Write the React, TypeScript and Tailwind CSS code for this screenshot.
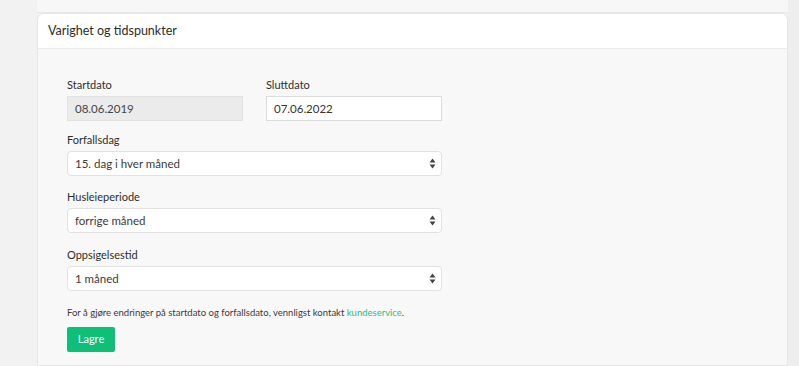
import { ReactNode } from 'react';

const font = { fontFamily: 'Lato, "Noto Sans", sans-serif' };

function Label({ children }: { children: ReactNode }) {
  return <div className="text-[11px] leading-[14px] text-[#2d2d2d] mb-[4px]">{children}</div>;
}

function Arrows() {
  return (
    <svg width="7" height="11" viewBox="0 0 7 11" className="text-[#444]">
      <path d="M3.5 0.5 L6.5 4.5 H0.5 Z" fill="currentColor" />
      <path d="M3.5 10.5 L6.5 6.5 H0.5 Z" fill="currentColor" />
    </svg>
  );
}

function Select({ value }: { value: string }) {
  return (
    <div className="w-[375px] h-[25px] bg-white border border-[#e2e2e2] rounded-[4px] flex items-center justify-between pl-[7px] pr-[5px] text-[11.5px] text-[#3a3a3a]">
      <span>{value}</span>
      <Arrows />
    </div>
  );
}

export default function App() {
  return (
    <div className="flex w-full h-[366px] overflow-hidden bg-[#f2f2f2]" style={font}>
      <div className="w-[37px] shrink-0 bg-[#f2f2f2]" />

      <div className="w-[751px] shrink-0 flex flex-col">
        {/* end of previous card */}
        <div className="h-[13px] shrink-0 bg-[#f7f7f7] border-b border-[#e8e8e8]" />

        <div className="flex-1 flex flex-col bg-[#f8f8f8] border border-[#e6e6e6] rounded-t-[7px] overflow-hidden">
          <div className="h-[35px] shrink-0 bg-white border-b border-[#ebebeb] flex items-center px-[10px] text-[12.5px] text-[#2b2b2b]">
            Varighet og tidspunkter
          </div>

          <div className="pl-[29px] pt-[29px]">
            <div className="flex gap-[23px]">
              <div>
                <Label>Startdato</Label>
                <div className="w-[176px] h-[25px] bg-[#ebebeb] border border-[#e2e2e2] flex items-center px-[7px] text-[11.5px] text-[#444]">
                  08.06.2019
                </div>
              </div>
              <div>
                <Label>Sluttdato</Label>
                <div className="w-[176px] h-[25px] bg-white border border-[#dcdcdc] flex items-center px-[7px] text-[11.5px] text-[#333]">
                  07.06.2022
                </div>
              </div>
            </div>

            <div className="mt-[12px]">
              <Label>Forfallsdag</Label>
              <Select value="15. dag i hver måned" />
            </div>
            <div className="mt-[14px]">
              <Label>Husleieperiode</Label>
              <Select value="forrige måned" />
            </div>
            <div className="mt-[15px]">
              <Label>Oppsigelsestid</Label>
              <Select value="1 måned" />
            </div>

            <p className="mt-[16px] text-[9.5px] leading-[12px] text-[#3a3a3a]">
              For å gjøre endringer på startdato og forfallsdato, vennligst kontakt{' '}
              <span className="text-[#1fc281]">kundeservice</span>.
            </p>

            <button className="mt-[8px] w-[48px] h-[25px] rounded-[2px] bg-[#0ebf78] text-white text-[11px]">
              Lagre
            </button>
          </div>
        </div>
      </div>

      <div className="flex-1 bg-[#eeeeee]" />
    </div>
  );
}
